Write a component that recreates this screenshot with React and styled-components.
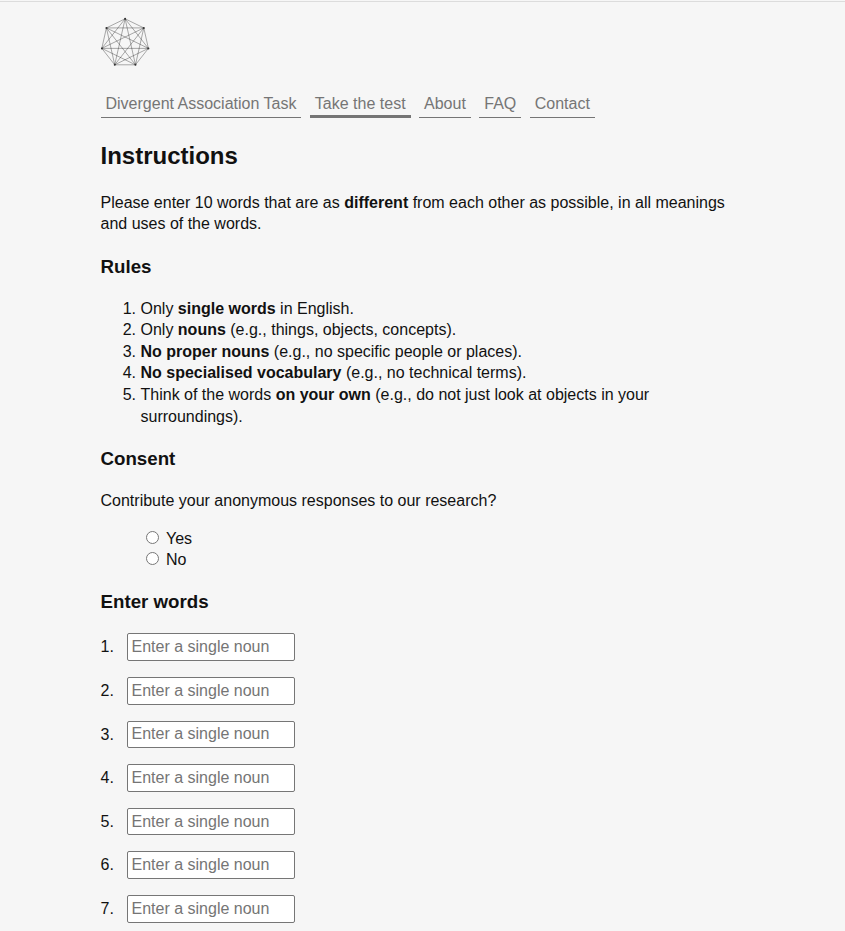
import React from "react";
import styled, { createGlobalStyle } from "styled-components";

const GlobalStyle = createGlobalStyle`
  * { box-sizing: border-box; }
  body {
    margin: 0;
    height: 931px;
    overflow: hidden;
    background: #f6f6f6;
    color: #111;
    font: 16px/21.6px "Liberation Sans", Arial, sans-serif;
  }
`;

const Page = styled.main`
  height: 931px;
  overflow: hidden;
  background: linear-gradient(#dcdcdc, #dcdcdc) 0 1px / 100% 1px no-repeat;
  padding: 17px 101px 0 100.5px;
`;

const Logo = styled.svg`
  display: block;
  width: 50px;
  height: 50px;
`;

const Nav = styled.nav`
  display: flex;
  align-items: flex-start;
  gap: 8.45px;
  height: 31px;
  margin-top: 25px;
`;

const NavLink = styled.a`
  height: 26px;
  padding: 1px 5px 0;
  color: #757575;
  white-space: nowrap;
  border-bottom: ${(p) => (p.$active ? 3 : 1)}px solid #757575;
`;

const Title = styled.h2`
  margin: 16.8px 0 19.5px;
  font-size: 24px;
  line-height: 32.4px;
`;

const Heading = styled.h3`
  margin: 18.72px 0;
  font-size: 18.72px;
  line-height: 25.27px;
`;

const Paragraph = styled.p`
  margin: 0;
`;

const Rules = styled.ol`
  margin: 0;
  padding-left: 40px;
`;

const Choices = styled.div`
  display: flex;
  flex-direction: column;
  height: 42.9px;
  margin-top: 16.4px;
  padding-left: 45px;
`;

const Choice = styled.label`
  display: flex;
  align-items: flex-start;
  gap: 7.5px;
`;

const Radio = styled.input`
  width: 13px;
  height: 13px;
  margin: 3px 0 0;
`;

const Words = styled.div`
  display: grid;
  gap: 16px;
`;

const WordRow = styled.label`
  display: grid;
  grid-template-columns: 26px 168px;
  align-items: center;
  height: 27.6px;
`;

const WordInput = styled.input`
  width: 168px;
  height: 27.6px;
  padding: 2px 4px;
  font: inherit;
  background: #fff;
  border: 1px solid #767676;
  border-radius: 2px;
  &::placeholder { color: #757575; }
`;

const links = ["Divergent Association Task", "Take the test", "About", "FAQ", "Contact"];

const points = Array.from({ length: 7 }, (_, i) => {
  const a = (i * 2 * Math.PI) / 7 - Math.PI / 2;
  return [24.1 + 23.9 * Math.cos(a), 26 + 24.2 * Math.sin(a)];
});

const edges = points.flatMap((a, i) => points.slice(i + 1).map((b) => [a, b]));

export default function App() {
  return (
    <Page>
      <GlobalStyle />
      <Logo viewBox="0 0 50 50" aria-label="Logo">
        {edges.map(([a, b], i) => (
          <line key={i} x1={a[0]} y1={a[1]} x2={b[0]} y2={b[1]} stroke="#222" strokeOpacity="0.42" strokeWidth="0.9" />
        ))}
        {points.map(([x, y], i) => (
          <circle key={i} cx={x} cy={y} r="1" fill="#333" />
        ))}
      </Logo>
      <Nav>
        {links.map((text, i) => (
          <NavLink key={text} $active={i === 1}>{text}</NavLink>
        ))}
      </Nav>
      <Title>Instructions</Title>
      <Paragraph>
        Please enter 10 words that are as <b>different</b> from each other as possible, in all meanings and uses of the words.
      </Paragraph>
      <Heading>Rules</Heading>
      <Rules>
        <li>Only <b>single words</b> in English.</li>
        <li>Only <b>nouns</b> (e.g., things, objects, concepts).</li>
        <li><b>No proper nouns</b> (e.g., no specific people or places).</li>
        <li><b>No specialised vocabulary</b> (e.g., no technical terms).</li>
        <li>Think of the words <b>on your own</b> (e.g., do not just look at objects in your surroundings).</li>
      </Rules>
      <Heading>Consent</Heading>
      <Paragraph>Contribute your anonymous responses to our research?</Paragraph>
      <Choices>
        <Choice><Radio type="radio" name="consent" />Yes</Choice>
        <Choice><Radio type="radio" name="consent" />No</Choice>
      </Choices>
      <Heading>Enter words</Heading>
      <Words>
        {[1, 2, 3, 4, 5, 6, 7].map((n) => (
          <WordRow key={n}>
            <span>{n}.</span>
            <WordInput type="text" placeholder="Enter a single noun" />
          </WordRow>
        ))}
      </Words>
    </Page>
  );
}
